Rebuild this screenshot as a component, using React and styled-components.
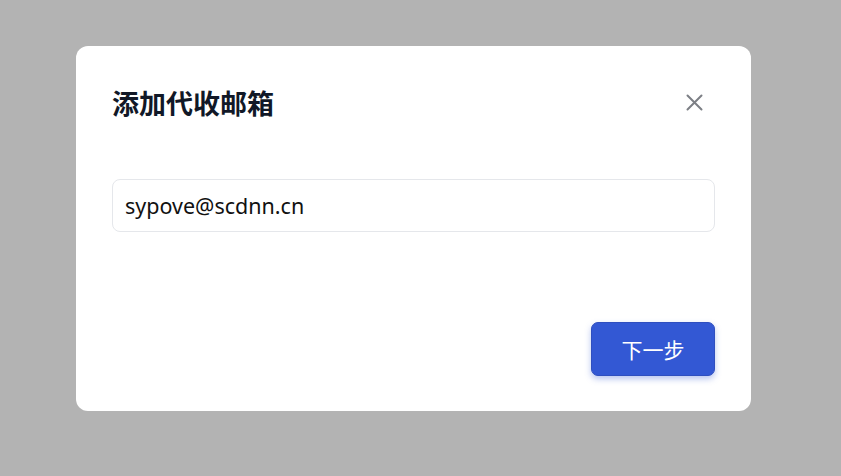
import React from 'react'
import styled, { createGlobalStyle } from 'styled-components'

const GlobalStyle = createGlobalStyle`
    html, body {
        margin: 0;
        padding: 0;
        height: 100%;
    }
    body {
        font-family: "Noto Sans", "Noto Sans CJK SC", sans-serif;
    }
`

const Overlay = styled.div`
    width: 100vw;
    height: 100vh;
    background-color: #b3b3b3;
    padding: 46px 0 0 76px;
    box-sizing: border-box;
`

const Dialog = styled.div`
    width: 675px;
    height: 365px;
    box-sizing: border-box;
    padding: 0 36px 35px 36px;
    background-color: white;
    border-radius: 12px;
    display: flex;
    flex-direction: column
`

const Header = styled.div`
    height: 42px;
    padding-top: 35px;
    display: flex;
    align-items: center;
    justify-content: space-between
`

const Title = styled.h2`
    margin: 0;
    font-family: "Noto Sans CJK SC", sans-serif;
    font-size: 27px;
    font-weight: 700;
    color: #111827
`

const CloseButton = styled.button`
    width: 40px;
    height: 40px;
    margin-right: 1px;
    padding: 0;
    border: none;
    background: none;
    display: flex;
    align-items: center;
    justify-content: center;
    color: #7c7f85;
    cursor: pointer
`

const Input = styled.input`
    margin-top: 56px;
    height: 53px;
    box-sizing: border-box;
    padding: 0 12px;
    border: 1px solid #e5e7eb;
    border-radius: 8px;
    font-family: "Noto Sans", sans-serif;
    font-size: 21.5px;
    color: #111;
    outline: none
`

const Footer = styled.div`
    margin-top: auto;
    display: flex;
    justify-content: flex-end
`

const PrimaryButton = styled.button`
    width: 124px;
    height: 54px;
    border: 1px solid #2f4fbf;
    border-radius: 7px;
    background-color: #3358d4;
    color: white;
    font-family: "Noto Sans CJK SC", sans-serif;
    font-size: 21px;
    font-weight: 400;
    box-shadow: 0 3px 6px rgba(51, 88, 212, 0.35);
    cursor: pointer
`

function App() {
    return (
        <Overlay>
            <GlobalStyle />
            <Dialog>
                <Header>
                    <Title>添加代收邮箱</Title>
                    <CloseButton aria-label="关闭">
                        <svg width="17" height="17" viewBox="0 0 17 17" fill="none" stroke="currentColor" strokeWidth="2" strokeLinecap="round">
                            <path d="M1.5 1.5 L15.5 15.5 M15.5 1.5 L1.5 15.5" />
                        </svg>
                    </CloseButton>
                </Header>
                <Input defaultValue="sypove@scdnn.cn" />
                <Footer>
                    <PrimaryButton>下一步</PrimaryButton>
                </Footer>
            </Dialog>
        </Overlay>
    )
}

export default App
